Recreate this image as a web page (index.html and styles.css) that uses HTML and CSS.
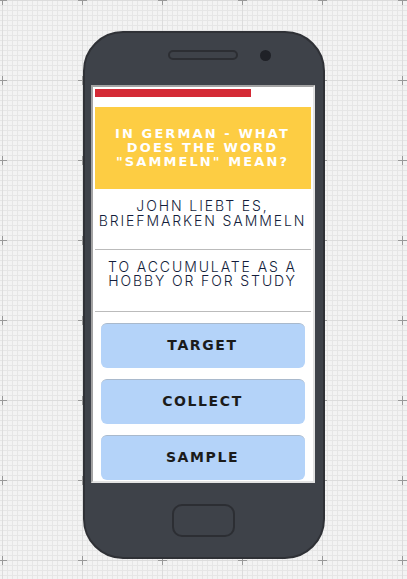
FILE: index.html
```html
<!DOCTYPE html>
<html lang="en">
<head>
    <meta charset="UTF-8">
    <meta name="viewport" content="width=device-width, initial-scale=1.0">
    <title>Quiz</title>
    <link rel="stylesheet" href="styles.css">
</head>
<body>
    <div class="phone">
        <div class="phone-top">
            <span class="speaker"></span>
            <span class="camera"></span>
        </div>
        <div class="screen">
            <div class="progress"></div>
            <div class="question">In German - what does the word "Sammeln" mean?</div>
            <div class="example">John liebt es, Briefmarken sammeln</div>
            <div class="hint">To accumulate as a hobby or for study</div>
            <div class="answers">
                <button class="answer">Target</button>
                <button class="answer">Collect</button>
                <button class="answer">Sample</button>
            </div>
        </div>
        <div class="home"></div>
    </div>
</body>
</html>
```

FILE: styles.css
```css
body {
    margin: 0;
    height: 579px;
    overflow: hidden;
    font-family: "DejaVu Sans", sans-serif;
    background-color: #f3f3f3;
    background-image:
        url("data:image/svg+xml,%3Csvg xmlns='http://www.w3.org/2000/svg' width='80' height='80'%3E%3Cpath d='M0 4.5H9M4.5 0V9' stroke='%23999'/%3E%3C/svg%3E"),
        linear-gradient(to right, #dcdcdc 1px, transparent 1px),
        linear-gradient(to bottom, #dcdcdc 1px, transparent 1px),
        linear-gradient(to right, #e6e6e6 1px, transparent 1px),
        linear-gradient(to bottom, #e6e6e6 1px, transparent 1px);
    background-size: 80px 80px, 80px 80px, 80px 80px, 5px 5px, 5px 5px;
    background-position: -2px -4px, 2px 0, 0 0, 2px 0, 0 0;
    display: flex;
    justify-content: center;
    padding-top: 31px;
    box-sizing: border-box;
}

.phone {
    width: 242px;
    height: 528px;
    box-sizing: border-box;
    background-color: #3e4249;
    border: 2px solid #2f3136;
    border-radius: 40px;
    display: flex;
    flex-direction: column;
    align-items: center;
}

.phone-top {
    display: flex;
    align-items: center;
    gap: 22px;
    height: 12px;
    margin-top: 16px;
}

.phone-top::before {
    content: "";
    width: 10px;
}

.speaker {
    width: 70px;
    height: 10px;
    box-sizing: border-box;
    border: 2px solid #2c2e33;
    border-radius: 6px;
}

.camera {
    width: 11px;
    height: 11px;
    border-radius: 50%;
    background-color: #1f2127;
}

.screen {
    width: 224px;
    height: 398px;
    margin-top: 24px;
    margin-right: 2px;
    box-sizing: border-box;
    padding: 2px;
    background-color: #fff;
    border: 2px solid;
    border-color: #a3a3a3 #e2e2e2 #e2e2e2 #a3a3a3;
    overflow: hidden;
}

.progress {
    width: 156px;
    height: 8px;
    background-color: #d42a36;
}

.question {
    margin-top: 10px;
    padding: 20px 8px;
    height: 42px;
    background-color: #fdcd43;
    color: #fff;
    font-weight: bold;
    font-size: 13px;
    line-height: 14px;
    letter-spacing: 2.1px;
    text-transform: uppercase;
    text-align: center;
}

.example,
.hint {
    color: #131d3b;
    font-family: "Inter", sans-serif;
    font-weight: 300;
    font-size: 14px;
    line-height: 14px;
    letter-spacing: 1.9px;
    text-transform: uppercase;
    text-align: center;
    border-bottom: 1px solid #bbb;
}

.example {
    height: 37px;
    padding: 9px 0 14px;
    line-height: 15px;
}

.hint {
    height: 37px;
    padding: 10px 0 14px;
}

.answers {
    display: flex;
    flex-direction: column;
    gap: 11px;
    padding: 11px 6px 0;
}

.answer {
    height: 45px;
    padding-bottom: 3px;
    border: none;
    border-top: 1px solid #a9b9cc;
    border-radius: 6px;
    background-color: #b4d3f9;
    color: #1b1b1b;
    font-family: "DejaVu Sans", sans-serif;
    font-weight: bold;
    font-size: 14px;
    letter-spacing: 1.6px;
    text-transform: uppercase;
    cursor: pointer;
}

.home {
    width: 63px;
    height: 33px;
    box-sizing: border-box;
    margin-top: 21px;
    border: 2px solid #2c2e33;
    border-radius: 10px;
}
```
